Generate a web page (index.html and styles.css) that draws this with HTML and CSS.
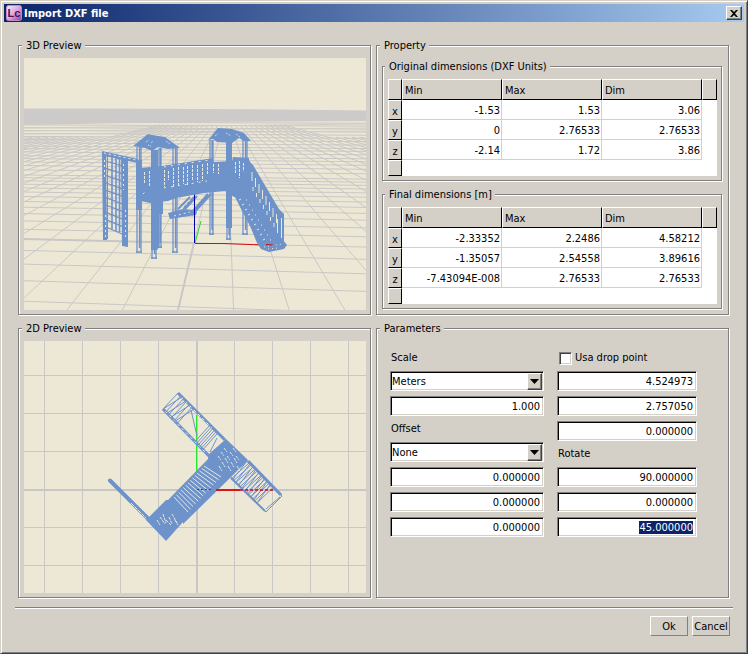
FILE: index.html
```html
<!DOCTYPE html>
<html lang="en">
<head>
<meta charset="utf-8">
<title>Import DXF file</title>
<link rel="stylesheet" href="styles.css">
</head>
<body>
<main class="window">
  <header class="titlebar">
    <svg class="app-icon" viewBox="0 0 16 16" aria-hidden="true">
      <defs><linearGradient id="appFill" x1="0" y1="0" x2="1" y2="1"><stop offset="0" stop-color="#fbeefa"/><stop offset=".5" stop-color="#dda6da"/><stop offset="1" stop-color="#8b3f96"/></linearGradient></defs>
      <rect x="0.5" y="0.5" width="15" height="15" rx="2" fill="url(#appFill)" stroke="#b98cc4"/>
      <text class="app-letters" x="8" y="12" text-anchor="middle">Lc</text>
    </svg>
    <h1 class="title">Import DXF file</h1>
    <button class="close" type="button" aria-label="Close">
      <svg viewBox="0 0 8 7" aria-hidden="true"><path d="M0 0h2l2 2 2-2h2L5 3.500 8 7H6L4 5 2 7H0l3-3.500z"/></svg>
    </button>
  </header>

  <form class="content">
    <div class="panels">
      <fieldset class="group">
        <legend>3D Preview</legend>
        <svg class="view" id="view3d" viewBox="24 58 342 252" role="img" aria-label="3D Preview"></svg>
      </fieldset>

      <fieldset class="group property">
        <legend>Property</legend>
        <fieldset class="group">
          <legend>Original dimensions (DXF Units)</legend>
          <table class="dims">
            <thead><tr><th class="row-head"></th><th class="num-col">Min</th><th class="num-col">Max</th><th class="num-col">Dim</th><th></th></tr></thead>
            <tbody>
              <tr><th>x</th><td>-1.53</td><td>1.53</td><td>3.06</td><td class="rest"></td></tr>
              <tr><th>y</th><td>0</td><td>2.76533</td><td>2.76533</td><td class="rest"></td></tr>
              <tr><th>z</th><td>-2.14</td><td>1.72</td><td>3.86</td><td class="rest"></td></tr>
              <tr class="last"><th></th><td class="rest" colspan="4"></td></tr>
            </tbody>
          </table>
        </fieldset>
        <fieldset class="group">
          <legend>Final dimensions [m]</legend>
          <table class="dims">
            <thead><tr><th class="row-head"></th><th class="num-col">Min</th><th class="num-col">Max</th><th class="num-col">Dim</th><th></th></tr></thead>
            <tbody>
              <tr><th>x</th><td>-2.33352</td><td>2.2486</td><td>4.58212</td><td class="rest"></td></tr>
              <tr><th>y</th><td>-1.35057</td><td>2.54558</td><td>3.89616</td><td class="rest"></td></tr>
              <tr><th>z</th><td>-7.43094E-008</td><td>2.76533</td><td>2.76533</td><td class="rest"></td></tr>
              <tr class="last"><th></th><td class="rest" colspan="4"></td></tr>
            </tbody>
          </table>
        </fieldset>
      </fieldset>

      <fieldset class="group">
        <legend>2D Preview</legend>
        <svg class="view" id="view2d" viewBox="24 341 342 252" role="img" aria-label="2D Preview"></svg>
      </fieldset>

      <fieldset class="group">
        <legend>Parameters</legend>
        <div class="params">
          <div class="column">
            <label class="caption" for="scale">Scale</label>
            <div class="combo">
              <select id="scale"><option>Meters</option></select>
              <span class="drop"><svg viewBox="0 0 9 5" aria-hidden="true"><path d="M0 0h9L4.500 5z"/></svg></span>
            </div>
            <input class="field" type="text" aria-label="Scale factor" value="1.000">
            <label class="caption" for="offset">Offset</label>
            <div class="combo">
              <select id="offset"><option>None</option></select>
              <span class="drop"><svg viewBox="0 0 9 5" aria-hidden="true"><path d="M0 0h9L4.500 5z"/></svg></span>
            </div>
            <input class="field" type="text" aria-label="Offset X" value="0.000000">
            <input class="field" type="text" aria-label="Offset Y" value="0.000000">
            <input class="field" type="text" aria-label="Offset Z" value="0.000000">
          </div>
          <div class="column">
            <label class="caption check"><input type="checkbox">Usa drop point</label>
            <input class="field" type="text" aria-label="Drop point X" value="4.524973">
            <input class="field" type="text" aria-label="Drop point Y" value="2.757050">
            <input class="field" type="text" aria-label="Drop point Z" value="0.000000">
            <label class="caption" for="rotateX">Rotate</label>
            <input class="field" type="text" id="rotateX" value="90.000000">
            <input class="field" type="text" aria-label="Rotate Y" value="0.000000">
            <input class="field" type="text" id="rotateZ" aria-label="Rotate Z" value="45.000000">
          </div>
        </div>
      </fieldset>
    </div>

    <footer class="actions">
      <button class="btn" type="button">Ok</button>
      <button class="btn" type="button">Cancel</button>
    </footer>
  </form>
</main>
<script src="script.js"></script>
</body>
</html>
```
FILE: styles.css
```css
* { box-sizing: border-box; }

body {
  margin: 0;
  background: #d4d0c8;
  color: #000;
  font: 11px/15px Tahoma, "DejaVu Sans Condensed", sans-serif;
}

.window {
  min-height: 100vh;
  padding: 2px;
  border: 1px solid;
  border-color: #d4d0c8 #404040 #404040 #d4d0c8;
  box-shadow: inset 1px 1px #fff, inset -1px -1px #808080;
}

.titlebar {
  display: flex;
  align-items: center;
  height: 18px;
  margin: 1px;
  padding: 0 2px;
  background: linear-gradient(90deg, #0a246a, #a6caf0);
}

.app-icon { width: 16px; height: 16px; }
.app-letters { font: bold 11px "Liberation Sans", sans-serif; fill: #4c0f5c; }

.title {
  flex: 1;
  margin: 0 2px;
  color: #fff;
  font-size: 11px;
  font-weight: bold;
}

.close {
  display: grid;
  place-items: center;
  width: 16px;
  height: 14px;
  padding: 0;
  background: #d4d0c8;
  border: 1px solid;
  border-color: #fff #404040 #404040 #fff;
  box-shadow: inset -1px -1px #808080;
}
.close svg { width: 8px; height: 7px; }

.content { padding: 15px 12px 0; }

.panels {
  display: grid;
  grid-template-columns: 353fr 353fr;
  gap: 6px 5px;
  padding: 0 4px 0 3px;
}

.group {
  min-width: 0;
  margin: 0;
  padding: 5px 4px 4px 5px;
  border: 1px solid #808080;
  box-shadow: 1px 1px #fff, inset 1px 1px #fff;
}
.group > legend {
  margin-left: -2px;
  padding: 0 3px 0 4px;
  background: #d4d0c8;
}

.property { padding: 6px 6px 5px 5px; }
.property > .group + .group { margin-top: 6px; }
.property > .group > legend { margin-left: -3px; }

.view { display: block; width: 100%; background: #ede8d6; }

.dims {
  width: 100%;
  table-layout: fixed;
  border-collapse: separate;
  border-spacing: 0;
  background: #fff;
}
.dims th, .dims td { height: 20px; padding: 2px 0 0; font-weight: normal; }
.dims th {
  background: #d4d0c8;
  border: 1px solid;
  border-color: #fff #000 #000 #fff;
  text-align: center;
}
.dims thead th { height: 21px; }
.dims .num-col { width: 100px; padding-left: 2px; text-align: left; }
.dims .row-head { width: 14px; }
.dims td {
  padding-right: 1px;
  border-right: 1px solid #d4d0c8;
  border-bottom: 1px solid #d4d0c8;
  text-align: right;
}
.dims td.rest { border: 0; }
.dims .last th, .dims .last td { height: 16px; padding: 0; }

.params {
  display: grid;
  grid-template-columns: 154fr 140fr;
  gap: 13px;
  padding: 9px 27px 0 8px;
}
.column { display: flex; flex-direction: column; gap: 5px; }

.caption { height: 16px; padding-left: 1px; line-height: 16px; }
.check { display: flex; align-items: center; gap: 3px; padding-left: 2px; }
.check input {
  appearance: none;
  width: 13px;
  height: 13px;
  margin: 0;
  background: #fff;
  border: 1px solid;
  border-color: #808080 #fff #fff #808080;
  box-shadow: inset 1px 1px #404040, inset -1px -1px #d4d0c8;
}

.field, .combo select {
  width: 100%;
  height: 20px;
  padding: 1px 3px 0 2px;
  background: #fff;
  color: #000;
  border: 1px solid;
  border-color: #808080 #fff #fff #808080;
  border-radius: 0;
  box-shadow: inset 1px 1px #000, inset -1px -1px #d4d0c8;
  font: inherit;
  outline: 0;
}
.field { text-align: right; }
.field::selection { background: #0a246a; color: #fff; }

.combo { position: relative; height: 20px; }
.combo select { appearance: none; display: block; padding-left: 1px; }
.drop {
  position: absolute;
  top: 2px;
  right: 2px;
  bottom: 1px;
  display: grid;
  place-items: center;
  width: 15px;
  background: #d4d0c8;
  border: 1px solid;
  border-color: #fff #404040 #404040 #fff;
  box-shadow: inset -1px -1px #808080;
  pointer-events: none;
}
.drop svg { width: 9px; height: 5px; }

.actions {
  display: flex;
  justify-content: flex-end;
  gap: 4px;
  margin-top: 9px;
  padding: 8px 3px 0 0;
  border-top: 1px solid #808080;
  box-shadow: inset 0 1px #fff;
}
.btn {
  width: 38px;
  height: 20px;
  padding: 0;
  background: #d4d0c8;
  color: #000;
  border: 1px solid;
  border-color: #fff #808080 #808080 #fff;
  font: inherit;
}
```
FILE: script.js
```js
const NS = 'http://www.w3.org/2000/svg';
const BLUE = '#6e92ca';
const PALE = '#e4e8e6';
const GRID = '#c9c7c6';

function shape(svg, d, attrs) {
  const p = document.createElementNS(NS, 'path');
  p.setAttribute('d', d);
  for (const k in attrs) p.setAttribute(k, attrs[k]);
  svg.appendChild(p);
}
const line = (svg, d, color, width = 1, extra = {}) =>
  shape(svg, d, { fill: 'none', stroke: color, 'stroke-width': width, ...extra });
const fill = (svg, points, color = BLUE) => shape(svg, 'M' + points + 'z', { fill: color });
const mix = (a, b, t) => [a[0] + (b[0] - a[0]) * t, a[1] + (b[1] - a[1]) * t];
const seg = (a, b) => `M${a[0].toFixed(1)} ${a[1].toFixed(1)}L${b[0].toFixed(1)} ${b[1].toFixed(1)}`;

// Rungs between the edges a-b and c-d
function rungs(a, b, c, d, n, from = 0, to = 1) {
  let out = '';
  for (let i = 0; i <= n; i++) {
    const t = from + (to - from) * i / n;
    out += seg(mix(a, b, t), mix(c, d, t));
  }
  return out;
}
function zigzag(a, b, c, d, n, from = 0, to = 1) {
  let out = '';
  for (let i = 0; i < n; i++) {
    const t = from + (to - from) * i / n;
    const u = from + (to - from) * (i + 1) / n;
    out += seg(mix(a, b, t), mix(c, d, u));
  }
  return out;
}

function draw3d(svg) {
  // Ground grid
  let d = '';
  const top = [226, 109];
  for (let k = -40; k <= 40; k++) {
    const bottom = [178 + 55.6 * k, 310];
    d += seg(mix(top, bottom, Math.abs(k) > 14 ? 0.14 : 0.08), bottom);
  }
  line(svg, d, GRID);
  d = '';
  let last = 999;
  for (let n = -4; n < 110; n++) {
    const y = 109 + 1 / (0.00746 + 0.0006 * n);
    if (last - y < 2.8) continue;
    last = y;
    const x = 226 - (y - 109) * 0.239;
    const m = (y - 105) / (x + 5600);
    d += seg([24, y + m * (24 - x)], [366, y + m * (366 - x)]);
  }
  line(svg, d, GRID);
  fill(svg, '24 108.500H92L280 109.500 366 110.500V121L190 122 24 125', '#cccbca');
  line(svg, 'M24 128L366 124M24 131L366 128M24 134L366 131', '#d0cdc6', 1);
  line(svg, 'M194 243L178 310M194 243L24 239', GRID, 2);

  // Axes
  line(svg, 'M194.500 243V190', '#0000a8');
  line(svg, 'M195 243L201 221', '#20dc20');
  line(svg, 'M195 243.500H224L276 245.500', '#d01010', 1.200);

  // Climbing net
  fill(svg, '102 152L106 153 107 240H103z M121 157L128 159V247L122 246');
  line(svg, 'M107.500 154V239M103.500 236V239', BLUE);
  line(svg, 'M102 152L138 160M102 154.500L138 162', BLUE, 2);
  line(svg, 'M112 155V229M116 156V231M119.500 157V232', BLUE, 1.600);
  line(svg, rungs([106, 161], [106, 227], [122, 166], [122, 234], 9), BLUE, 1.300);
  line(svg, 'M104 153L136 160M104.500 160V180M123.500 164V190M125.500 210V240M105.500 215V238', PALE, 1, { 'stroke-dasharray': '2 3' });

  // Posts
  const posts = [[136, 142, 147, 253], [151, 157, 150, 259], [158, 162, 148, 248], [172, 178, 146, 253],
    [209, 214, 140, 235], [226, 231, 140, 240], [242, 248, 140, 235]];
  for (const [l, r, t, b] of posts) {
    line(svg, `M${l + 1} ${t}V${b}M${r - 1} ${t}V${b}M${l} ${b - 1}H${r}M${(l + r) / 2 + 0.5} ${t}V${b - 5}`, BLUE, 1.300);
  }
  fill(svg, '151 195H159V247L157 250H151z M158 190H163V214H158z M226 140H232V228H226');
  fill(svg, '136 160H142V210H136z M151 150H158V170H151');

  // Decks and bridge
  fill(svg, '140 168L162 166 207 159 213 158 213 162 232 161 233 157 249 158 250 196 234 197 225 191 204 193 176 198 168 201 150 203 140 201');
  line(svg, 'M144.500 172V184M149.500 171V187M164.500 170V187M168.500 171V180M173.500 168V188M178.500 167V185M183.500 167V184M187.500 166V185M192.500 165V180M197.500 165V182M202.500 164V181M207.500 163V175M213.500 164V173M218.500 164V174M235.500 162V174M239.500 161V178M243.500 163V176', PALE, 1, { 'stroke-dasharray': '3 1' });
  line(svg, 'M164 167L210 160M164 188L207 181M143 194L146 191', PALE, 1, { 'stroke-dasharray': '2 5' });

  // Swing seat
  fill(svg, '168 213L183 209 193 210 197 212 196 215 170 219');
  line(svg, 'M169 215L192 212 208 194M192 215L211 194M178 209L190 197M183 209L194 197M185 209L197 196M196 209L208 196', BLUE, 2);
  line(svg, 'M174 216L190 212M182 209L192 198', PALE, 1, { 'stroke-dasharray': '2 3' });
  line(svg, 'M194.500 243V197', '#0000a8');

  // Slide
  fill(svg, '233 193L249 160 281 215 283 240 287 245 284 249 269 252 261 249 257 243 250 226 242 211');
  fill(svg, '247 160L253 165 279 209 284 214 284 242 279 242 260 210 247 190');
  for (let i = 0; i < 8; i++) {
    const x = 252 + i * 3.500, y = 172 + i * 6;
    line(svg, `M${x} ${y}V${y + 9}M${x + 1} ${y + 15}V${y + 19}`, '#ece8d6', 1);
  }
  line(svg, 'M281.500 218V238M277.500 219V233', '#ece8d6');
  for (let i = 0; i < 9; i++) {
    line(svg, `M${239 + i * 3} ${200 + i * 5}l2 -1m5 1l1 0`, PALE, 1);
  }
  line(svg, 'M264 247L282 244M268 249L278 248', PALE, 1, { 'stroke-dasharray': '1 3' });
  line(svg, 'M266 244.500L273 245', '#d01010');

  // Roofs
  fill(svg, '133 146L148 134 152 135 165 137 180 148 168 149 158 147 152 151 145 148');
  fill(svg, '208 140L218 128 232 129 244 133 251 141 244 141 239 138 232 143 217 142 213 139');
  line(svg, 'M146 142l3 -2m2 3l2 -2m-5 4l3 1m15 -5l4 3M215 136l3 -2m8 -1l5 3m5 -2l4 3', PALE, 1, { 'stroke-dasharray': '1 1' });
}

function draw2d(svg) {
  // Grid
  let d = '';
  for (const x of [44, 82, 120, 158, 234, 272, 310, 348]) d += `M${x + 0.5} 341V593`;
  for (const y of [375, 413, 451, 527, 565]) d += `M24 ${y + 0.5}H366`;
  line(svg, d, GRID);
  line(svg, 'M197 341V593M24 490H366', GRID, 2);

  // Axes
  line(svg, 'M196.500 489V415', '#28e628', 1);

  // Upper arm
  const a = [178, 393], b = [225, 440], c = [163, 409], e = [210, 457];
  line(svg, seg(a, b) + seg(c, e), BLUE, 3);
  line(svg, seg([181, 397], [212, 428]) + seg([165, 411], [206, 453]), PALE, 1, { 'stroke-dasharray': '3 3' });
  line(svg, rungs(a, b, c, e, 5, 0, 0.3) + zigzag(c, e, a, b, 4, 0, 0.34), BLUE);
  line(svg, rungs(a, b, c, e, 5, 0.68, 0.85) + 'M191 410L197 436M210 452L217 438', BLUE);

  // Lower-right arm
  const f = [247, 461], g = [282, 496], h = [230, 476], k = [266, 512];
  line(svg, seg(f, g) + seg(h, k) + seg(g, k), BLUE, 1);
  line(svg, seg([248, 461], [281, 495]), BLUE, 3);
  line(svg, seg([231, 478], [265, 511]), BLUE, 2);
  line(svg, rungs(f, g, h, k, 13, 0, 0.75) + zigzag(f, g, h, k, 9, 0, 0.75) + seg([266, 509], [280, 497]), BLUE);
  line(svg, 'M240 490H273', '#c83048', 2, { 'stroke-dasharray': '3 2' });

  // Climbing net
  line(svg, 'M110 480.500L148 518.500', BLUE, 4, { 'stroke-linecap': 'round' });
  line(svg, 'M131 503L146 518', PALE, 1, { 'stroke-dasharray': '4 1' });

  // Bridge and towers
  fill(svg, '226 439L248 460 229 479 183 524 183 522 166 541 146 520 166 500 168 500 208 459 209 454');
  const p = [204, 466], q = [174, 497], r = [221, 477], s = [188, 512];
  line(svg, rungs(p, q, r, s, 13, 0, 1), PALE);
  line(svg, 'M197 489.500H212', '#cc1414', 1, { 'stroke-dasharray': '2 2' });
  line(svg, 'M216 490H240', '#d81818', 2);
  let marks = '';
  for (let i = 0; i < 7; i++) {
    marks += `M${157 + i * 3} ${520 - (i % 3) * 3}l${3 + i % 2 * 2} ${5 + i % 3 * 2}`;
    marks += `M${218 + i * 3} ${456 - (i % 3) * 4}l3 4m-2 6l3 5`;
  }
  line(svg, marks, PALE, 1, { 'stroke-dasharray': '3 1' });
}

draw3d(document.getElementById('view3d'));
draw2d(document.getElementById('view2d'));

const rotateZ = document.getElementById('rotateZ');
rotateZ.focus();
rotateZ.select();
```
